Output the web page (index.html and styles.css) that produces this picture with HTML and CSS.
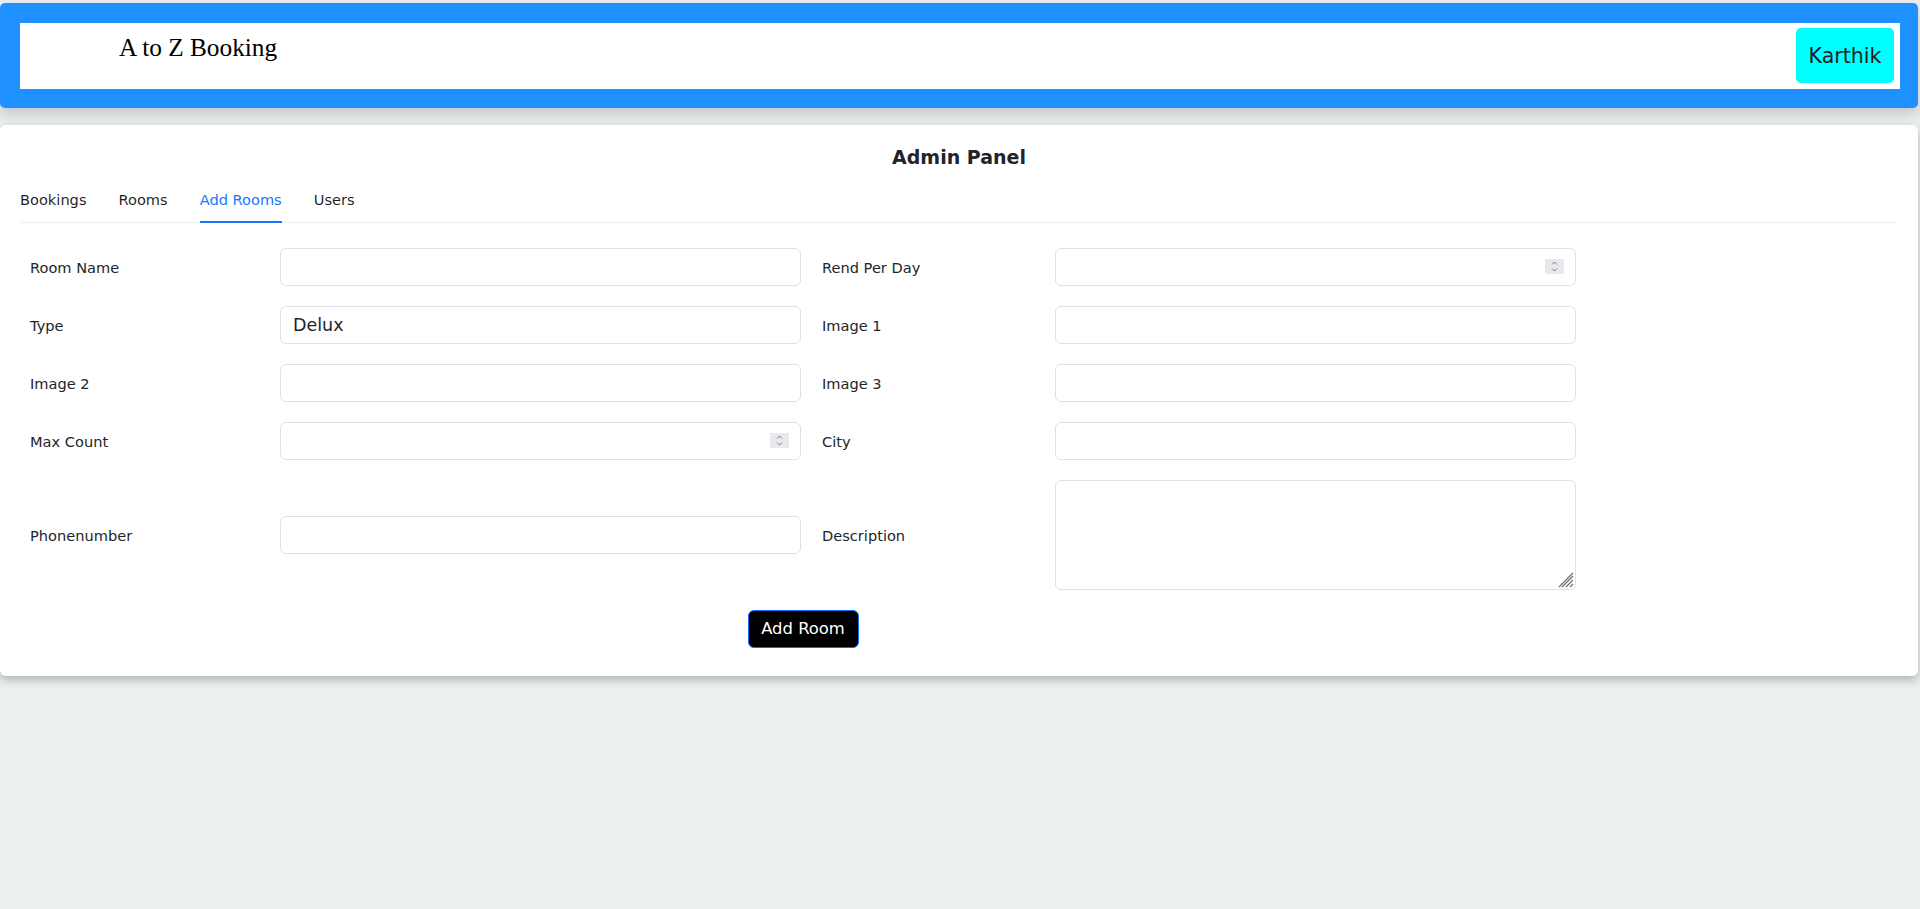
FILE: index.html
```html
<!DOCTYPE html>
<html lang="en">
<head>
<meta charset="utf-8">
<title>A to Z Booking - Admin</title>
<link rel="stylesheet" href="styles.css">
</head>
<body>
<header class="navbar">
  <div class="navbar-inner">
    <h1 class="brand">A to Z Booking</h1>
    <button class="user-btn" type="button">Karthik</button>
  </div>
</header>

<main class="card">
  <h5 class="card-title">Admin Panel</h5>
  <nav class="tabs">
    <span class="tab">Bookings</span>
    <span class="tab">Rooms</span>
    <span class="tab active">Add Rooms</span>
    <span class="tab">Users</span>
  </nav>

  <form class="room-form">
    <label class="lbl lbl-left">Room Name</label>
    <input class="ctl" type="text">
    <label class="lbl lbl-right">Rend Per Day</label>
    <div class="num-wrap">
      <input class="ctl" type="text" inputmode="numeric">
      <span class="spin"><svg width="19" height="15" viewBox="0 0 19 15"><path d="M7 5.5 L9.5 3 L12 5.5" fill="none" stroke="#7a7a7e" stroke-width="1"/><path d="M7 9.5 L9.5 12 L12 9.5" fill="none" stroke="#7a7a7e" stroke-width="1"/></svg></span>
    </div>

    <label class="lbl lbl-left">Type</label>
    <input class="ctl" type="text" value="Delux">
    <label class="lbl lbl-right">Image 1</label>
    <input class="ctl" type="text">

    <label class="lbl lbl-left">Image 2</label>
    <input class="ctl" type="text">
    <label class="lbl lbl-right">Image 3</label>
    <input class="ctl" type="text">

    <label class="lbl lbl-left">Max Count</label>
    <div class="num-wrap">
      <input class="ctl" type="text" inputmode="numeric">
      <span class="spin"><svg width="19" height="15" viewBox="0 0 19 15"><path d="M7 5.5 L9.5 3 L12 5.5" fill="none" stroke="#7a7a7e" stroke-width="1"/><path d="M7 9.5 L9.5 12 L12 9.5" fill="none" stroke="#7a7a7e" stroke-width="1"/></svg></span>
    </div>
    <label class="lbl lbl-right">City</label>
    <input class="ctl" type="text">

    <label class="lbl lbl-left">Phonenumber</label>
    <input class="ctl" type="text">
    <label class="lbl lbl-right">Description</label>
    <div class="area-wrap">
      <textarea class="ctl ctl-area"></textarea>
      <span class="grip"><svg width="16" height="16" viewBox="0 0 16 16"><path d="M15 4 L4 15 M15 8 L8 15 M15 12 L12 15 M15 1 L1 15" fill="none" stroke="#6f6f73" stroke-width="1.2"/></svg></span>
    </div>

    <div class="submit-row">
      <button class="add-btn" type="button">Add Room</button>
    </div>
  </form>
</main>
</body>
</html>
```

FILE: styles.css
```css
* { box-sizing: border-box; }

html, body {
  margin: 0;
  padding: 0;
}

body {
  background: #eceff0;
  font-family: "DejaVu Sans", "Open Sans", sans-serif;
  color: #212529;
  min-height: 909px;
}

.navbar {
  margin: 3px 2px 0 0;
  padding: 20px 18px 19px 20px;
  background: #1e90ff;
  border-radius: 5px;
  box-shadow: 0 6px 14px rgba(0, 0, 0, 0.18);
}

.navbar-inner {
  height: 66px;
  background: #ffffff;
  display: flex;
  justify-content: space-between;
  align-items: flex-start;
}

.brand {
  margin: 9px 0 0 99px;
  font-family: "Liberation Serif", "Times New Roman", serif;
  font-weight: 400;
  font-size: 25.3px;
  line-height: 30px;
  color: #000;
}

.user-btn {
  margin: 5px 6px 0 0;
  width: 98px;
  height: 55px;
  border: none;
  border-radius: 5px;
  background: #00ffff;
  color: #1b1f23;
  font-family: "DejaVu Sans", sans-serif;
  font-size: 20.6px;
  padding: 0;
}

.card {
  margin: 17px 2px 0 0;
  background: #fff;
  border-radius: 6px;
  padding: 20px 20px 28px 20px;
  box-shadow: 0 4px 10px rgba(0, 0, 0, 0.25);
}

.card-title {
  margin: 0 0 6px 0;
  text-align: center;
  font-size: 19px;
  line-height: 24px;
  font-weight: 700;
  color: #212529;
}

.tabs {
  display: flex;
  gap: 32px;
  border-bottom: 1px solid #eeeeee;
  margin-bottom: 25px;
}

.tab {
  padding: 14px 0 10px;
  font-size: 14.6px;
  line-height: 22px;
  color: rgba(0, 0, 0, 0.88);
  border-bottom: 2px solid transparent;
  margin-bottom: -1px;
}

.tab.active {
  color: #1677ff;
  border-bottom-color: #1677ff;
}

.room-form {
  width: 1556px;
  display: grid;
  grid-template-columns: 260px 521px 254px 521px;
  grid-template-rows: 38px 38px 38px 38px 110px 38px;
  row-gap: 20px;
  align-items: center;
}

.lbl {
  font-size: 14.6px;
  color: #212529;
}

.lbl-left { padding-left: 10px; }
.lbl-right { padding-left: 21px; }

.ctl {
  display: block;
  width: 100%;
  height: 38px;
  padding: 6px 12px;
  font-family: "DejaVu Sans", sans-serif;
  font-size: 17.5px;
  line-height: 24px;
  color: #212529;
  background: #fff;
  border: 1px solid #dee2e6;
  border-radius: 6px;
  outline: none;
}

.num-wrap,
.area-wrap {
  position: relative;
}

.spin {
  position: absolute;
  right: 12px;
  top: 11px;
  width: 19px;
  height: 15px;
  background: #e9e9ed;
  display: flex;
}

.ctl-area {
  height: 110px;
  resize: none;
}

.grip {
  position: absolute;
  right: 2px;
  bottom: 2px;
  width: 16px;
  height: 16px;
  display: flex;
}

.submit-row {
  grid-column: 1 / -1;
  display: flex;
  justify-content: center;
  padding-left: 10px;
  margin-top: -1px;
}

.add-btn {
  height: 38px;
  width: 111px;
  padding: 0;
  background: #000;
  color: #fff;
  border: 1px solid #0d6efd;
  border-radius: 6px;
  font-family: "DejaVu Sans", sans-serif;
  font-size: 16.4px;
}
```
